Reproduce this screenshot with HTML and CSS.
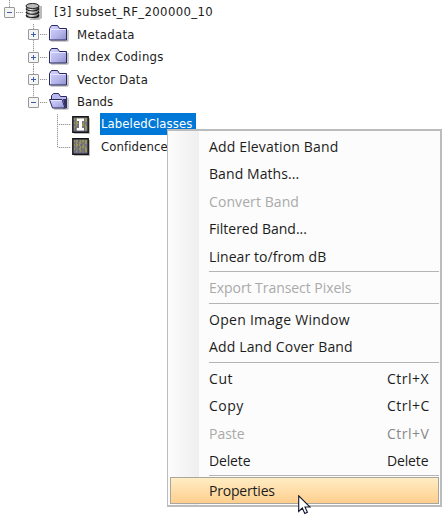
FILE: index.html
```html
<!DOCTYPE html>
<html lang="en">
<head>
<meta charset="utf-8">
<title>Product Explorer</title>
<link rel="stylesheet" href="styles.css">
</head>
<body>
<svg class="defs" width="0" height="0">
  <defs>
    <linearGradient id="fold" x1="0" y1="0" x2="1" y2="1">
      <stop offset="0" stop-color="#d6d6ff"/><stop offset=".6" stop-color="#b4b4ea"/><stop offset="1" stop-color="#8e8ecc"/>
    </linearGradient>
    <linearGradient id="disk" x1="0" y1="0" x2="1" y2="0">
      <stop offset="0" stop-color="#555"/><stop offset=".35" stop-color="#eee"/><stop offset="1" stop-color="#222"/>
    </linearGradient>
    <symbol id="folder" viewBox="0 0 20 17">
      <path d="M2 16h17V5" fill="none" stroke="#999"/>
      <path d="M.5 3.500 2.500.5h6L10.500 3.500h7v11.500H.5z" fill="url(#fold)" stroke="#29295f"/>
      <path d="M1.500 14V4.500h15" fill="none" stroke="#e6e6ff"/>
    </symbol>
    <symbol id="folder-open" viewBox="0 0 20 17">
      <path d="M5 16h14V5" fill="none" stroke="#999"/>
      <path d="M2.500 6V2.500L4.500.5h5L11.500 3.500h6V15h-3z" fill="#b9b9ee" stroke="#29295f"/>
      <path d="M14 6h3.500v8.500h-1.800z" fill="#343461"/>
      <path d="M.5 6.500h12.500l3 8.500H3.500z" fill="url(#fold)" stroke="#29295f"/>
      <path d="M1.700 7.500h11" stroke="#e6e6ff"/>
    </symbol>
    <symbol id="band" viewBox="0 0 18 18">
      <path d="M2 2h16v16H2z" fill="#bbb"/>
      <path d="M.8.8h15.400v15.400H.8z" fill="#75758c" stroke="#151515" stroke-width="1.400"/>
      <path d="M2 3h4M8 3h7M3 5h2M7 5h3M12 5h3M2 7h6M11 7h2M3 9h2M8 9h6M2 11h2M6 11h3M12 11h3M4 13h1M8 13h2M13 13h2" stroke="#c0b420" stroke-width="1.100"/>
      <path d="M3.500 2v13M6.500 2v13M9.500 2v13M12.500 2v13" stroke="#5c5c78" stroke-width=".6"/>
    </symbol>
  </defs>
</svg>

<ul class="tree">
  <li class="row root"><span class="box minus"></span><span class="dots"></span>
    <svg class="db" viewBox="0 0 17 17"><path d="M3 3h14v12l-3 2H5z" fill="#bbb"/><path d="M1 3v10c0 3.600 13 3.600 13 0V3z" fill="url(#disk)"/><ellipse cx="7.500" cy="3" rx="6.500" ry="2.500" fill="#bbb" stroke="#222"/><path d="M1 5.700c1 3 12 3 13 0M1 9c1 3 12 3 13 0M1 12.200c1 3 12 3 13 0" fill="none" stroke="#111" stroke-width="1.100"/><path d="M1.500 7.100c1 2.800 11 2.800 12 0M1.500 10.400c1 2.800 11 2.800 12 0" fill="none" stroke="#ddd" stroke-width=".7"/></svg>
    <span class="label t-root">[3] subset_RF_200000_10</span></li>
  <li class="row group"><span class="box plus"></span><span class="dots"></span><svg class="folder"><use href="#folder"/></svg><span class="label t-meta">Metadata</span></li>
  <li class="row group"><span class="box plus"></span><span class="dots"></span><svg class="folder"><use href="#folder"/></svg><span class="label t-index">Index Codings</span></li>
  <li class="row group"><span class="box plus"></span><span class="dots"></span><svg class="folder"><use href="#folder"/></svg><span class="label t-vector">Vector Data</span></li>
  <li class="row group last"><span class="box minus"></span><span class="dots"></span><svg class="folder"><use href="#folder-open"/></svg><span class="label">Bands</span></li>
  <li class="row leaf"><span class="dots"></span><svg class="band" viewBox="0 0 18 18"><use href="#band"/><path d="M5 2.500h7v2.500h-2v7h2v2.500H5V12h2V5H5z" fill="#fff"/></svg><span class="label selected">LabeledClasses</span></li>
  <li class="row leaf last"><span class="dots"></span><svg class="band" viewBox="0 0 18 18"><use href="#band"/></svg><span class="label t-conf">Confidence</span></li>
</ul>

<div class="menu">
  <div class="item"><span class="m-elev">Add Elevation Band</span></div>
  <div class="item"><span class="m-maths">Band Maths...</span></div>
  <div class="item disabled"><span class="m-conv">Convert Band</span></div>
  <div class="item"><span>Filtered Band...</span></div>
  <div class="item"><span class="m-lin">Linear to/from dB</span></div>
  <hr>
  <div class="item disabled"><span class="m-exp">Export Transect Pixels</span></div>
  <hr>
  <div class="item"><span class="m-open">Open Image Window</span></div>
  <div class="item"><span class="m-land">Add Land Cover Band</span></div>
  <hr>
  <div class="item"><span class="m-cut">Cut</span><kbd>Ctrl+X</kbd></div>
  <div class="item"><span class="m-copy">Copy</span><kbd>Ctrl+C</kbd></div>
  <div class="item disabled"><span>Paste</span><kbd>Ctrl+V</kbd></div>
  <div class="item"><span class="m-del">Delete</span><kbd class="m-del">Delete</kbd></div>
  <hr class="short">
  <div class="item active"><span class="m-prop">Properties</span></div>
</div>

<svg class="cursor" viewBox="0 0 13 20"><path d="M.7.8v15.600l3.600-3.400 2.500 5.400 2.600-1.200-2.400-5.200h5z" fill="#fff" stroke="#111630" stroke-width="1.100"/></svg>
</body>
</html>
```
FILE: styles.css
```css
* { box-sizing: border-box; }
body { margin: 0; width: 443px; height: 518px; overflow: hidden; background: #fff; position: relative; }
.defs { position: absolute; }

.tree { list-style: none; margin: 0; padding: 1px 0 0; font: 13px/18px "DejaVu Sans Condensed", "DejaVu Sans", sans-serif; font-stretch: condensed; color: #1c1c1c; }
.row { display: flex; align-items: center; height: 22.5px; position: relative; white-space: nowrap; }
.root { padding-left: 4px; }
.group { padding-left: 28px; }
.leaf { padding-left: 57px; }
.row::before { content: ""; position: absolute; top: 0; bottom: 0; width: 1px; background: repeating-linear-gradient(#999 0 1px, #e4e4e4 1px 2px); }
.root::before { left: 9px; top: -1px; height: 7px; }
.group::before { left: 33px; }
.leaf::before { left: 57px; }
.group.last::before, .leaf.last::before { bottom: 11px; }
.box { width: 11px; height: 11px; flex: none; border: 1px solid #999; border-radius: 1px; position: relative; z-index: 1;
  background: linear-gradient(#3d5fa8, #3d5fa8) center / 5px 1px no-repeat, #f5f5f5; }
.plus { background: linear-gradient(#3d5fa8, #3d5fa8) center / 5px 1px no-repeat, linear-gradient(#3d5fa8, #3d5fa8) center / 1px 5px no-repeat, #f5f5f5; }
.dots { width: 7px; height: 1px; flex: none; margin-left: 1px; background: repeating-linear-gradient(90deg, #999 0 1px, #e4e4e4 1px 2px); }
.leaf .dots { width: 14px; margin-left: 0; }
.db { width: 17px; height: 17px; margin: -2px 12px 0 2px; flex: none; }
.folder { width: 20px; height: 17px; margin: -2px 8px 0 2px; flex: none; }
.band { width: 18px; height: 18px; margin: 0 9px 0 1px; flex: none; }
.label { flex: none; }
.t-root { letter-spacing: .35px; }
.t-meta { letter-spacing: .3px; }
.t-index { letter-spacing: .3px; }
.t-vector { letter-spacing: .2px; }
.selected { background: #0078d7; color: #fff; height: 22px; line-height: 22px; width: 96px; padding-left: 1px; margin: -1px 0 0 1px; letter-spacing: .08px; }
.t-conf { padding-left: 1px; margin-left: 1px; letter-spacing: .1px; }

.menu { position: absolute; left: 167px; top: 129px; width: 275px; height: 378px; border: 2px solid #bcbcbc; border-left-width: 1px; padding: 1.5px 1px 0 2px;
  background: linear-gradient(90deg, #fcfcfc, #efefef 31px, #fcfcfc 31px); font: 14px/26px "Open Sans", "Noto Sans", sans-serif; color: #1c1c1c; }
.item { height: 27.5px; padding: .5px 9px 0 39px; display: flex; justify-content: space-between; align-items: center; white-space: nowrap; }
.item kbd { font: inherit; width: 43px; letter-spacing: .5px; }
.disabled { color: #aaa; }
.disabled kbd { color: #888; }
.menu hr { height: 1px; border: 0; margin: 1px 0 2px 39px; background: #b4b4b4; }
.menu hr.short { margin: 0 0 1px 39px; }
.active { border: 1px solid #a9a6a0; background: linear-gradient(#ffedc4, #ffcf8e); padding-left: 38px; padding-top: 2px; }
.m-elev, .m-land { letter-spacing: .15px; }
.m-maths, .m-conv, .m-lin { letter-spacing: .08px; }
.m-exp { letter-spacing: -.05px; }
.m-open { letter-spacing: .27px; }
.m-cut { letter-spacing: .6px; }
.m-copy { letter-spacing: .5px; }
.item .m-del { letter-spacing: -.15px; }
.m-prop { letter-spacing: -.2px; }
.cursor { position: absolute; left: 298px; top: 495px; width: 13px; height: 20px; }
```
